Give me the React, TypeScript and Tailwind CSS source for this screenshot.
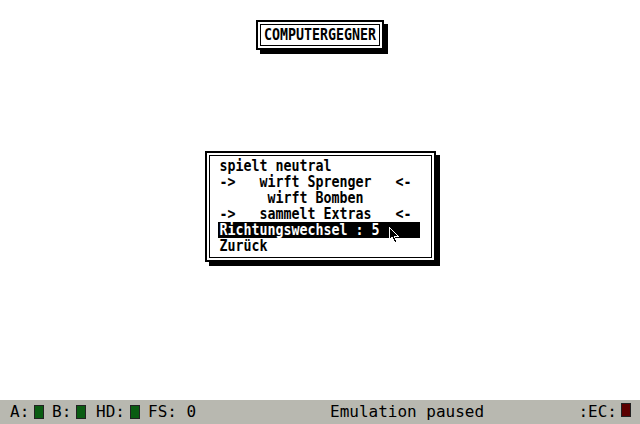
import React from "react";

const atari = "font-['DejaVu_Sans_Mono',monospace] font-bold text-[13.3px] leading-[16px] text-black";

function Cursor() {
  return (
    <svg
      className="absolute left-[170px] top-[4px]"
      width="12"
      height="18"
      viewBox="0 0 12 18"
    >
      <path
        d="M1 1 L1 14 L4 11 L7 17 L9 16 L6 10 L10 10 Z"
        fill="#000"
        stroke="#fff"
        strokeWidth="1"
        shapeRendering="crispEdges"
      />
    </svg>
  );
}

function Led({ color }: { color: string }) {
  return <span className={`inline-block w-[10px] h-[14px] border border-[#222] ${color}`} />;
}

function T({ children }: { children: React.ReactNode }) {
  return <span className="inline-block origin-center scale-y-[1.18]">{children}</span>;
}

export default function App() {
  const rows = [
    "spielt neutral",
    "->   wirft Sprenger   <-",
    "      wirft Bomben",
    "->   sammelt Extras   <-",
  ];
  return (
    <div className="w-[640px] h-[424px] flex flex-col bg-white overflow-hidden">
      <div className="h-[400px] flex flex-col items-center">
        <div className="mt-[20px] border-2 border-black p-[2px] bg-white shadow-[4px_4px_0_#000]">
          <div className="border border-black px-[3px] py-[2px]">
            <div className={`${atari} w-[112px] whitespace-pre`}>
              <T>COMPUTERGEGNER</T>
            </div>
          </div>
        </div>

        <div className="mt-[101px] w-[231px] border-2 border-black p-[2px] bg-white shadow-[4px_4px_0_#000]">
          <div className="border border-black pl-[8px] pt-[2px] pb-[3px]">
            {rows.map((r) => (
              <div key={r} className={`${atari} h-[16px] pl-[2px] whitespace-pre`}>
                <T>{r}</T>
              </div>
            ))}
            <div className={`${atari} relative h-[16px] w-[202px] pl-[2px] whitespace-pre bg-black text-white`}>
              <span className="text-white">
                <T>Richtungswechsel : 5</T>
              </span>
              <Cursor />
            </div>
            <div className={`${atari} h-[16px] pl-[2px] whitespace-pre`}>
              <T>Zurück</T>
            </div>
          </div>
        </div>
      </div>

      <div className="h-[24px] bg-[#b8b8b0] flex items-center font-['DejaVu_Sans_Mono',monospace] text-[16px] leading-[20px] text-black whitespace-pre">
        <span className="ml-[10px] w-[24px]">A:</span>
        <Led color="bg-[#0a5c12]" />
        <span className="ml-[8px] w-[24px]">B:</span>
        <Led color="bg-[#0a5c12]" />
        <span className="ml-[10px] w-[34px]">HD:</span>
        <Led color="bg-[#0a5c12]" />
        <span className="ml-[8px] w-[60px]">FS: 0</span>
        <span className="ml-[122px] w-[170px]">Emulation paused</span>
        <span className="ml-auto">:EC:</span>
        <span className="ml-[4px] mr-[9px]">
          <Led color="bg-[#5c0000]" />
        </span>
      </div>
    </div>
  );
}
